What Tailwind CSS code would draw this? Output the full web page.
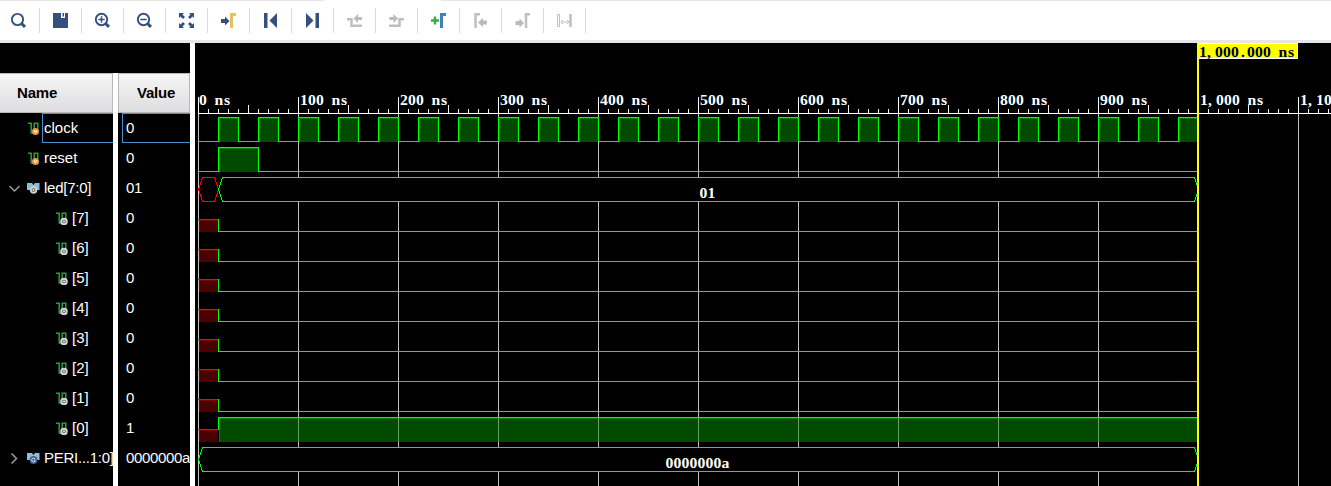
<!DOCTYPE html>
<html lang="en">
<head>
<meta charset="utf-8">
<title>Waveform Viewer</title>
<script src="https://cdn.jsdelivr.net/npm/@tailwindcss/browser@4"></script>
</head>
<body class="w-[1331px] h-[486px] overflow-hidden bg-black font-['Liberation_Sans',Arial,sans-serif]">
<svg class="hidden">
  <defs>
    <g id="bit" fill="none" stroke="#2f9a42" stroke-width="1.5"><path d="M0 2.2H3.2V12H6.2V2.2H9.8V8"/></g>
    <g id="sig"><use href="#bit"/><circle cx="7.5" cy="10.5" r="3.5" fill="#ef9a3a"/><path d="M6 9L7.5 12L9 9" fill="none" stroke="#fff" stroke-width="1"/></g>
    <g id="reg"><use href="#bit"/><circle cx="8" cy="10.5" r="2.8" fill="#555" stroke="#d4d4d4" stroke-width="2"/><circle cx="8" cy="10.5" r="1" fill="#eee"/></g>
    <g id="bus"><path d="M0 2H5L6.5 4L8 2H12.5V9H0Z" fill="#8fbdd6"/></g>
  </defs>
</svg>
<div class="flex flex-col w-[1331px] h-[486px]">
  <header class="h-[43px] shrink-0 bg-white border-b-[3px] border-[#e6e6e6]">
    <div class="h-px bg-[#e8e8e8] flex justify-start"><div class="ml-[324px] w-[117px] h-px bg-white"></div></div>
    <svg class="block" width="600" height="39" viewBox="0 1 600 39" fill="none">
      <path d="M39.5 8V33M81.5 8V33M123.5 8V33M165.5 8V33M207.5 8V33M249.5 8V33M291.5 8V33M333.5 8V33M375.5 8V33M417.5 8V33M459.5 8V33M501.5 8V33M543.5 8V33M585.5 8V33" stroke="#dadada"/>
      <g stroke="#34507f" stroke-width="1.9">
        <circle cx="17.5" cy="19.5" r="5.6"/><path d="M21.5 23.5L25 26.8" stroke-width="3"/>
        <circle cx="101.5" cy="19.5" r="5.7"/><path d="M105.5 23.5L109 26.8" stroke-width="3"/><path d="M98.3 19.5H104.7M101.5 16.3V22.7" stroke-width="1.5"/>
        <circle cx="143.5" cy="19.5" r="5.7"/><path d="M147.5 23.5L151 26.8" stroke-width="3"/><path d="M140.3 19.5H146.7" stroke-width="1.5"/>
      </g>
      <g fill="#34507f">
        <path d="M53 13H61V18H65V13H68V28H53Z"/><path d="M62.5 13H64V16.5H62.5Z"/>
        <path d="M179 13H184L182.5 14.5L185 17L183 19L180.500 16.500L179 18ZM194 13V18L192.500 16.500L190 19L188 17L190.500 14.500L189 13ZM179 28V23L180.500 24.500L183 22L185 24L182.500 26.500L184 28ZM194 28H189L190.500 26.500L188 24L190 22L192.500 24.500L194 23Z"/>
        <path d="M221 19H225V16.500L229.500 21L225 25.500V23H221Z"/>
        <path d="M264 13H267.500V28H264ZM277 13V28L269.500 20.500Z"/>
        <path d="M306 13V28L313.500 20.500ZM315.500 13H319V28H315.500Z"/>
      </g>
      <path d="M231.500 28V14.500H236" stroke="#e1c460" stroke-width="3"/>
      <g fill="#bababa">
        <path d="M353.500 18.500L358 14V17H362V20H358V23ZM398 18.500L393.500 14V17H389.500V20H393.500V23Z"/>
        <path d="M478 22.500L483 18V20.500H487V24.500H483V27ZM524 23L519.500 18.500V21H515.500V25H519.500V27.500Z"/>
      </g>
      <g stroke="#bfbfbf" stroke-width="2.500">
        <path d="M347 19.300H351.500V25.800H362M389 25.800H399.500V19.300H404"/>
        <path d="M475.500 28V14.300H480M526 28V14.300H530"/>
      </g>
      <path d="M431 20.500H439M435 16.500V24.500" stroke="#3cab41" stroke-width="2.500"/>
      <path d="M441.500 28V14.500H446" stroke="#3c83bd" stroke-width="3"/>
      <path d="M557.500 14.500H559.500V26.500H557.500ZM561 22H569M563 20L561 22L563 24M567 20L569 22L567 24" stroke="#bfbfbf"/><path d="M570.500 14V27" stroke="#bfbfbf" stroke-width="2.500"/>
    </svg>
  </header>
  <main class="flex flex-1 min-h-0">
    <section class="w-[113px] shrink-0 overflow-hidden">
      <div class="h-[30px]"></div>
      <div class="h-10 border border-l-0 border-[#b8b8b8] bg-linear-to-b from-[#f5f5f5] to-[#dedee2] pl-[17px] text-[15px] tracking-[-0.2px] leading-[38px] font-bold text-black">Name</div>
      <div id="names" class="text-[15px] leading-[30px] text-white whitespace-nowrap"></div>
    </section>
    <div class="w-[5px] shrink-0 bg-white mt-[30px]"></div>
    <section class="w-[72px] shrink-0 overflow-hidden">
      <div class="h-[30px]"></div>
      <div class="h-10 border border-[#b8b8b8] bg-linear-to-b from-[#f5f5f5] to-[#dedee2] pl-[18px] text-[15px] tracking-[-0.2px] leading-[38px] font-bold text-black">Value</div>
      <div id="values" class="text-[15px] tracking-[-0.35px] leading-[30px] text-white"></div>
    </section>
    <div class="w-[5px] shrink-0 bg-white"></div>
    <svg id="wave" class="block shrink-0" width="1136" height="443" viewBox="195 43 1136 443" shape-rendering="crispEdges"></svg>
  </main>
</div>
<script>
const icon = (id, w) => `<svg class="shrink-0" width="${w}" height="14" viewBox="0 0 ${w} 14">${id}</svg>`;
const sig = icon('<use href="#sig"/>', 15);
const reg = icon('<use href="#reg"/>', 16);
const bus = icon('<use href="#bus"/><circle cx="6.500" cy="9" r="2.800" fill="#555" stroke="#d0d0d0" stroke-width="1.900"/><circle cx="6.500" cy="9" r="1" fill="#eee"/>', 16);
const par = icon('<use href="#bus"/><circle cx="6.500" cy="9" r="3.900" fill="#46618f"/><path d="M8 7.800A1.900 1.900 0 1 0 8 10.300V9.200H6.800" fill="none" stroke="#d5dfef"/>', 16);
const chev = d => `<svg class="shrink-0" width="11" height="12" viewBox="0 0 11 12" fill="none" stroke="#9a9a9a" stroke-width="1.500"><path d="${d}"/></svg>`;
const rows = [['clock', '0'], ['reset', '0'], ['led[7:0]', '01'], ...[7,6,5,4,3,2,1,0].map(n => ['[' + n + ']', n ? '0' : '1']), ['PERI...1:0]', '0000000a']];
let names = '', values = '';
rows.forEach(([n, v], i) => {
  if (i < 2) names += `<div class="h-[30px] flex items-center pl-[28px]">${sig}<div class="${i ? 'ml-px' : 'ml-[-1px] w-[72px] border border-r-0 border-[#4a90d0] pl-px leading-[28px]'}">${n}</div></div>`;
  else if (n[0] === '[') names += `<div class="h-[30px] flex items-center pl-[56px]">${reg}<span>${n}</span></div>`;
  else names += `<div class="h-[30px] flex items-center pl-[9px]">${chev(i === 2 ? 'M0.500 4L5.500 9L10.500 4' : 'M2.500 1.500L7.500 6.500L2.500 11.500')}<span class="w-[7px] shrink-0"></span>${i === 2 ? bus : par}<span class="ml-px tracking-[-0.25px]">${n}</span></div>`;
  values += `<div class="h-[30px] ${i ? 'pl-2' : 'ml-1 pl-[3px] border border-r-0 border-[#4a90d0] leading-[28px]'}">${v}</div>`;
});
document.getElementById('names').innerHTML = names;
document.getElementById('values').innerHTML = values;

const G = '#00ff00', R = '#ff0000';
let s = '';
const rect = (x, y, w, h, f) => { s += `<rect x="${x}" y="${y}" width="${w}" height="${h}" fill="${f}"/>`; };
const SX = 1.12;
const text = (x, y, t, f) => {
  const xs = [...t].map((c, i) => ((x + i * 8 + (c === '.' ? 2 : c === 's' ? 1 : c === 'n' ? -0.5 : 0)) / SX).toFixed(2)).join(' ');
  s += `<text transform="scale(${SX} 1)" x="${xs}" y="${y}" fill="${f}" font-family="Liberation Serif" font-weight="700" font-size="14">${t}</text>`;
};
for (let x = 198; x < 1331; x += 100) rect(x, 114, 1, 372, '#c0c0c0');
rect(198, 113, 1133, 1, '#fff');
for (let x = 198, i = 0; x < 1331; x += 10, i++) {
  const h = i % 10 === 0 ? 16 : i % 5 === 0 ? 8 : 4;
  rect(x, 113 - h, 1, h, '#fff');
  if (i % 10 === 0) text(x + (i ? 2 : 1), 105, (i * 10).toLocaleString('en-US') + ' ns', '#fff');
}
const high = (x1, x2, y) => {
  rect(x1 + 1, y + 1, x2 - x1 - 1, 24, '#004b00');
  rect(x1 + 1, y + 1, x2 - x1 - 1, 1, '#008000'); rect(x1 + 1, y + 1, 1, 24, '#008000');
  rect(x1, y, x2 - x1 + 1, 1, G);
};
for (let x = 198; x < 1198; x += 40) {
  rect(x, 141, 21, 1, G);
  high(x + 20, Math.min(x + 40, 1198), 117);
  rect(x + 20, 117, 1, 25, G);
  if (x + 40 < 1198) rect(x + 40, 117, 1, 25, G);
}
rect(198, 171, 21, 1, G); high(218, 258, 147); rect(218, 147, 1, 25, G); rect(258, 147, 1, 25, G); rect(258, 171, 940, 1, G);
const busShape = (x1, x2, y, c) => { s += `<path d="M${x1}.500 ${y + 12}.500L${x1 + 4}.500 ${y}.500H${x2 - 4}.500L${x2}.500 ${y + 12}.500L${x2 - 4}.500 ${y + 24}.500H${x1 + 4}.500Z" fill="#000" stroke="${c}"/>`; };
busShape(198, 218, 177, R); busShape(218, 1198, 177, G); busShape(198, 1198, 447, G);
for (let i = 0; i < 8; i++) {
  const y = 207 + i * 30;
  rect(199, y + 13, 19, 12, '#4b0000'); rect(199, y + 13, 19, 1, '#800000'); rect(199, y + 13, 1, 12, '#800000');
  rect(198, y + 12, 20, 1, R);
  if (i < 7) { rect(218, y + 12, 1, 13, G); rect(218, y + 24, 980, 1, G); }
  else {
    high(218, 1198, y); rect(218, y, 1, 13, G);
    for (let x = 298; x < 1198; x += 100) rect(x, y + 1, 1, 24, '#60a060');
  }
}
text(699.5, 198, '01', '#fff');
text(665.5, 468, '0000000a', '#fff');
rect(1197, 43, 2, 443, '#ffff00');
rect(1198, 43, 100, 16, '#ffff00'); rect(1198, 43, 100, 1, '#fff'); rect(1198, 58, 100, 1, '#fff'); rect(1297, 43, 1, 16, '#fff');
text(1199, 57, '1,000.000 ns', '#000');
document.getElementById('wave').innerHTML = s;
</script>
</body>
</html>
